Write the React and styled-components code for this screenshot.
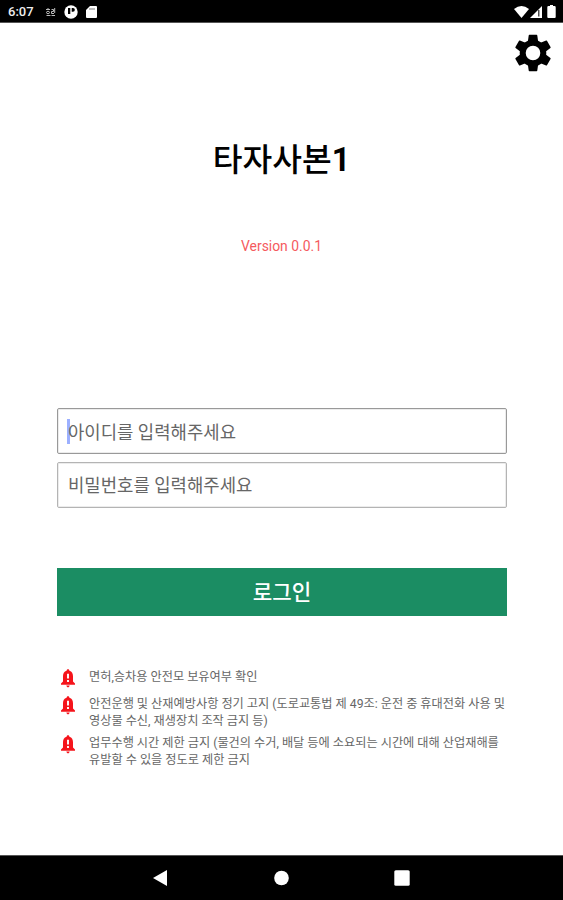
import React from "react";
import styled, { createGlobalStyle } from "styled-components";

const notices = [
  ["면허,승차용 안전모 보유여부 확인"],
  [
    "안전운행 및 산재예방사항 정기 고지 (도로교통법 제 49조: 운전 중 휴대전화 사용 및",
    "영상물 수신, 재생장치 조작 금지 등)",
  ],
  [
    "업무수행 시간 제한 금지 (물건의 수거, 배달 등에 소요되는 시간에 대해 산업재해를",
    "유발할 수 있을 정도로 제한 금지",
  ],
];

const StatusIcons = () => (
  <React.Fragment>
    <svg width="11" height="10" viewBox="0 0 11 10" fill="none" stroke="#bbb">
      <path d="M1 2.5h4M3 1v1M1.5 5.5a1.5 1.2 0 1 0 3 0a1.5 1.2 0 1 0 -3 0M1.5 8.5h4M6.5 2.5h2v2h-2v2h2.5M9.7 1v5M6.5 8.5h3.5" />
    </svg>
    <svg width="14" height="14" viewBox="0 0 14 14">
      <circle cx="7" cy="7" r="6.7" fill="#fff" />
      <path d="M4 3h2.3v6H4zM7.7 3H9a1.8 1.8 0 0 1 0 3.7H7.7z" fill="#000" />
    </svg>
    <svg width="11" height="12" viewBox="0 0 11 12">
      <path d="M4 0h6q1 0 1 1v10q0 1-1 1H1q-1 0-1-1V4z" fill="#fff" />
      <path d="M4 2v2M6 2v2M8 2v2" stroke="#777" />
    </svg>
  </React.Fragment>
);

const SignalIcons = () => (
  <React.Fragment>
    <svg width="15" height="12" viewBox="0 0 15 12">
      <path d="M0 3Q7.5-3 15 3L7.5 12z" fill="#fff" />
    </svg>
    <svg width="12" height="12" viewBox="0 0 12 12">
      <path d="M12 0v12H0z" fill="#fff" />
      <path d="M8.8 4v6.5" stroke="#222" strokeWidth="1.2" />
    </svg>
    <svg width="9" height="13" viewBox="0 0 9 13">
      <path d="M3 0h3v1h1.5q1.2 0 1.2 1.2V12q0 1-1 1H1.3q-1 0-1-1V2.2Q.3 1 1.5 1H3z" fill="#fff" />
    </svg>
  </React.Fragment>
);

const GearIcon = () => (
  <svg width="42" height="42" viewBox="-21 -21 42 42">
    {[0, 60, 120, 180, 240, 300].map((angle) => (
      <path
        key={angle}
        transform={`rotate(${angle})`}
        d="M-3.6-18.2h7.2q.6 0 .7.6l.9 6.6h-10.4l.9-6.6q.1-.6.7-.6z"
      />
    ))}
    <circle r="10.3" fill="none" stroke="#000" strokeWidth="6" />
  </svg>
);

const BellIcon = () => (
  <svg width="16" height="19" viewBox="0 0 16 19">
    <path
      d="M8 0.3c.9 0 1.4.6 1.4 1.5C12 2.6 13 4.7 13 7.3v5.2l2 2v1.2H1v-1.2l2-2V7.3c0-2.6 1-4.7 3.6-5.5C6.6.9 7.1.3 8 .3z"
      fill="#f5141b"
    />
    <path d="M6.3 16.6h3.4Q9.4 18.4 8 18.4T6.3 16.6z" fill="#f5141b" />
    <path d="M8 4.7v4.8M8 11v2" stroke="#fff" strokeWidth="1.9" />
  </svg>
);

export default function App() {
  return (
    <React.Fragment>
      <GlobalStyle />
      <Screen>
        <StatusBar>
          <StatusLeft>
            <Clock>6:07</Clock>
            <StatusIcons />
          </StatusLeft>
          <StatusRight>
            <SignalIcons />
          </StatusRight>
        </StatusBar>
        <Toolbar>
          <SettingsButton aria-label="설정">
            <GearIcon />
          </SettingsButton>
        </Toolbar>
        <Title>
          타자사본<b>1</b>
        </Title>
        <Version>Version 0.0.1</Version>
        <LoginForm onSubmit={(e) => e.preventDefault()}>
          <Field>
            <Caret />
            <Input placeholder="아이디를 입력해주세요" />
          </Field>
          <Field $light>
            <Input type="password" placeholder="비밀번호를 입력해주세요" />
          </Field>
          <LoginButton type="submit">로그인</LoginButton>
        </LoginForm>
        <NoticeList>
          {notices.map((lines) => (
            <Notice key={lines[0]}>
              <BellIcon />
              <NoticeText>
                {lines.map((line) => (
                  <span key={line}>{line}</span>
                ))}
              </NoticeText>
            </Notice>
          ))}
        </NoticeList>
        <NavBar>
          <svg width="15" height="18" viewBox="0 0 15 18">
            <path d="M14 1v16L0 9z" fill="#fff" />
          </svg>
          <svg width="16" height="16" viewBox="0 0 16 16">
            <circle cx="8.5" cy="8" r="7.3" fill="#fff" />
          </svg>
          <svg width="16" height="16" viewBox="0 0 16 16">
            <rect x="0.3" y="0.3" width="15.4" height="15.4" rx="1.5" fill="#fff" />
          </svg>
        </NavBar>
      </Screen>
    </React.Fragment>
  );
}

const GlobalStyle = createGlobalStyle`
  * {
    box-sizing: border-box;
  }
  body {
    margin: 0;
    background: #fff;
    font-family: Roboto, "Noto Sans CJK KR", sans-serif;
  }
  svg {
    display: block;
    flex-shrink: 0;
  }
`;

const Screen = styled.div`
  display: flex;
  flex-direction: column;
  width: 563px;
  height: 900px;
  overflow: hidden;
`;

const StatusBar = styled.header`
  display: flex;
  align-items: center;
  justify-content: space-between;
  height: 23px;
  padding: 1px 7px 0 8px;
  background: #000;
  border-bottom: 1px solid #555;
`;

const StatusLeft = styled.div`
  display: flex;
  align-items: center;
  gap: 8px;
`;

const StatusRight = styled.div`
  display: flex;
  align-items: center;
  gap: 1px;
  > svg:last-child {
    margin-left: 4px;
  }
`;

const Clock = styled.span`
  width: 29px;
  font-size: 13px;
  font-weight: 500;
  line-height: 16px;
  color: #eee;
`;

const Toolbar = styled.div`
  display: flex;
  justify-content: flex-end;
  height: 60px;
  padding: 9px 9px 0 0;
`;

const SettingsButton = styled.button`
  width: 42px;
  height: 42px;
  padding: 0;
  border: 0;
  background: none;
  color: #000;
`;

const Title = styled.h1`
  margin: 53px 0 0;
  font-size: 32.3px;
  font-weight: 500;
  line-height: 48px;
  text-align: center;
  color: #000;
  > b {
    font-weight: 700;
  }
`;

const Version = styled.p`
  margin: 52px 0 0;
  font-size: 13.9px;
  line-height: 20px;
  text-align: center;
  color: #f55a5e;
`;

const LoginForm = styled.form`
  display: flex;
  flex-direction: column;
  gap: 8px;
  margin: 152px 56px 0 57px;
`;

const Field = styled.div`
  display: flex;
  align-items: center;
  position: relative;
  height: 46px;
  padding: ${(props) => (props.$light ? "0" : "2px")} 0 0 10px;
  border: 1px solid ${(props) => (props.$light ? "#b4b4b4" : "#999")};
  border-radius: 2px;
  box-shadow: inset 0 0 0 1px #ececec;
`;

const Caret = styled.i`
  position: absolute;
  left: 9px;
  top: 10px;
  width: 3px;
  height: 25px;
  background: #9cb0ff;
`;

const Input = styled.input`
  position: relative;
  width: 100%;
  height: 40px;
  padding: 1px 0 0;
  border: 0;
  outline: 0;
  background: none;
  font-family: inherit;
  font-size: 17.8px;
  &::placeholder {
    color: #666;
    opacity: 1;
  }
`;

const LoginButton = styled.button`
  height: 48px;
  margin-top: 52px;
  padding: 0 0 3px;
  border: 0;
  background: #1b8d63;
  color: #fff;
  font-family: inherit;
  font-size: 21.2px;
  font-weight: 500;
`;

const NoticeList = styled.ul`
  display: flex;
  flex-direction: column;
  gap: 2px;
  flex: 1;
  margin: 51px 0 0;
  padding: 0 0 0 60px;
  list-style: none;
`;

const Notice = styled.li`
  display: flex;
  gap: 13px;
  min-height: 25px;
  > svg {
    margin-top: 2px;
  }
`;

const NoticeText = styled.p`
  display: flex;
  flex-direction: column;
  margin: 0;
  padding: 2px 0 1px;
  font-size: 12.2px;
  line-height: 17px;
  white-space: nowrap;
  color: #666;
`;

const NavBar = styled.nav`
  display: flex;
  align-items: center;
  justify-content: center;
  gap: 105px;
  height: 45px;
  border-top: 1px solid #555;
  background: #000;
`;
